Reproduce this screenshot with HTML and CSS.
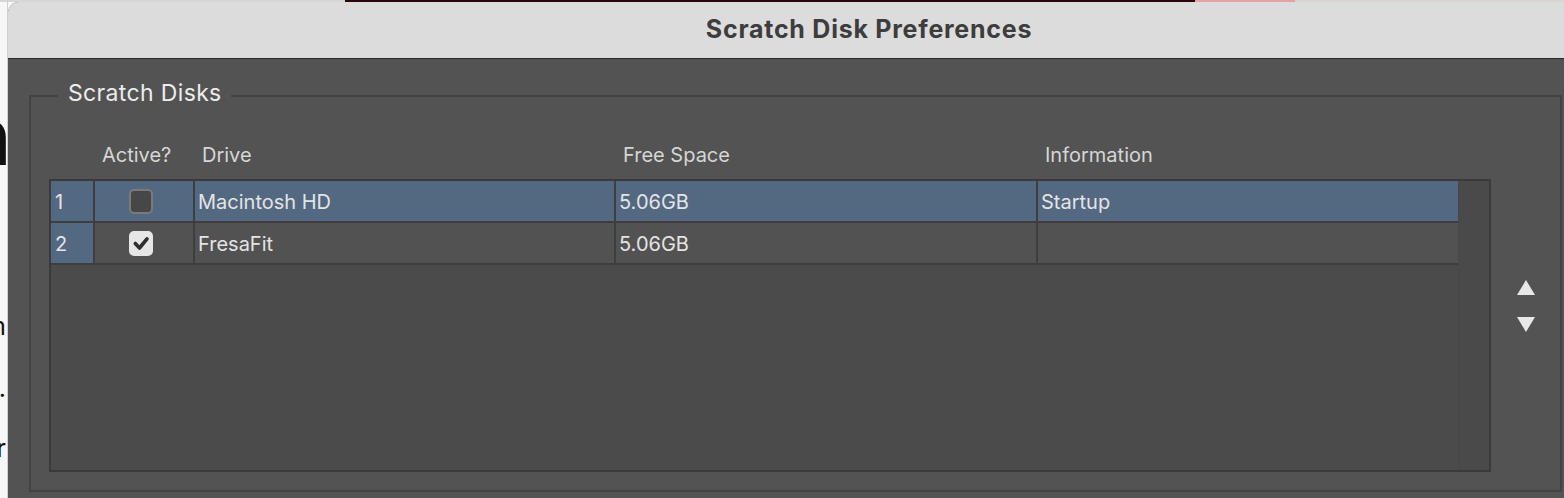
FILE: index.html
```html
<!DOCTYPE html>
<html lang="en">
<head>
<meta charset="utf-8">
<title>Scratch Disk Preferences</title>
<link rel="stylesheet" href="styles.css">
</head>
<body>
<div class="page">
  <div class="pline big"><span>Design</span></div>
  <div class="pline small l1"><span>Custom</span></div>
  <div class="pline small l2"><span>Here is the space.</span></div>
  <div class="pline small l3"><span>Other</span></div>
</div>
<div class="window">
  <div class="titlebar"><h1 class="title">Scratch Disk Preferences</h1></div>
  <div class="content">
    <div class="group">
      <div class="legend">Scratch Disks</div>
      <div class="group-body">
        <div class="main">
          <div class="heads">
            <div class="head"></div>
            <div class="head">Active?</div>
            <div class="head">Drive</div>
            <div class="head">Free Space</div>
            <div class="head">Information</div>
          </div>
          <div class="table">
            <div class="rows">
              <div class="row sel">
                <div class="cell idx">1</div>
                <div class="cell chk"><span class="box"></span></div>
                <div class="cell">Macintosh HD</div>
                <div class="cell">5.06GB</div>
                <div class="cell">Startup</div>
              </div>
              <div class="row">
                <div class="cell idx">2</div>
                <div class="cell chk"><span class="box on"><svg viewBox="0 0 24 24" width="24" height="24"><path d="M6.3 12.5 L10.5 17 L18 7.8" fill="none" stroke="#2e2e2e" stroke-width="3.6" stroke-linecap="round" stroke-linejoin="round"/></svg></span></div>
                <div class="cell">FresaFit</div>
                <div class="cell">5.06GB</div>
                <div class="cell"></div>
              </div>
            </div>
            <div class="track"></div>
          </div>
        </div>
        <div class="arrows">
          <svg class="arrow" viewBox="0 0 18 15" width="18" height="15"><path d="M9 0 L18 15 L0 15 Z" fill="#e8e8e8"/></svg>
          <svg class="arrow" viewBox="0 0 18 15" width="18" height="15"><path d="M0 0 L18 0 L9 15 Z" fill="#e8e8e8"/></svg>
        </div>
      </div>
    </div>
  </div>
</div>
</body>
</html>
```

FILE: styles.css
```css
* { box-sizing: border-box; }
html, body { margin: 0; padding: 0; }
body {
  width: 1564px;
  height: 498px;
  overflow: hidden;
  display: flex;
  font-family: "Inter", "Liberation Sans", sans-serif;
  background:
    linear-gradient(to right, #d6d6d6 0 345px, #2a0608 345px 1195px, #e4a2a2 1195px 1295px, #d8d4d0 1295px) top left / 100% 2px no-repeat,
    #f7f7f7;
}
.page {
  width: 8px;
  flex-shrink: 0;
  overflow: hidden;
  padding-top: 96px;
  border-right: 1px solid #cfcfcf;
  color: #111;
}
.pline {
  display: flex;
  justify-content: flex-end;
  white-space: nowrap;
  padding-right: 1px;
}
.pline span { flex-shrink: 0; }
.big { font-size: 80px; line-height: 80px; }
.big span { margin-right: -6px; }
.small { font-size: 25px; line-height: 30px; }
.l1 { margin-top: 135px; }
.l2 { margin-top: 32px; }
.l3 { margin-top: 30px; }

.window {
  flex: 1;
  margin-top: 2px;
  border-top-left-radius: 11px;
  overflow: hidden;
  display: flex;
  flex-direction: column;
  background: #535353;
}
.titlebar {
  height: 57px;
  flex-shrink: 0;
  background: #dcdcdc;
  border-bottom: 1px solid #2b2b2b;
  padding-left: 166px;
  text-align: center;
}
.title {
  margin: 0;
  font-size: 25px;
  font-weight: 700;
  letter-spacing: 0.75px;
  line-height: 54px;
  color: #3d3d3d;
}
.content { flex: 1; }
.group {
  margin: 36px 2px 0 21px;
  border: 2px solid #434343;
  padding: 0 0 18px 18px;
}
.legend {
  width: fit-content;
  margin: -18px 0 0 9px;
  padding: 0 9px 0 10px;
  background: #535353;
  font-size: 23px;
  letter-spacing: 0.35px;
  line-height: 28px;
  color: #ececec;
}
.group-body { display: flex; }
.main { width: 1442px; flex-shrink: 0; }
.heads {
  margin: 35px 0 13px 2px;
  display: grid;
  grid-template-columns: 42px 98px 419px 420px 420px;
  column-gap: 2px;
  height: 24px;
}
.head {
  padding-left: 7px;
  font-size: 20px;
  line-height: 26px;
  color: #d6d6d6;
}
.table {
  height: 293px;
  border: 2px solid #3a3a3a;
  background: #4b4b4b;
  display: flex;
}
.rows { width: 1407px; flex-shrink: 0; }
.row {
  display: grid;
  grid-template-columns: 42px 98px 419px 420px 420px;
  column-gap: 2px;
  background: #3e3e3e;
  border-bottom: 2px solid #3e3e3e;
}
.cell {
  height: 40px;
  background: #525252;
  padding-left: 3px;
  font-size: 20px;
  line-height: 43px;
  color: #e4e4e4;
}
.row .idx { background: #536881; padding-left: 4px; }
.row.sel .cell { background: #536881; }
.chk { display: flex; align-items: center; padding-left: 34px; }
.box {
  width: 24px;
  height: 25px;
  border-radius: 5px;
  border: 2px solid #7a7a7a;
  background: #474747;
  display: flex;
  align-items: center;
  justify-content: center;
}
.box.on { background: #e6e6e6; border-color: #e6e6e6; }
.box svg { display: block; flex-shrink: 0; }
.track {
  flex: 1;
  background: #4a4a4a;
  border-left: 1px solid #474747;
}
.arrows {
  flex: 1;
  display: flex;
  flex-direction: column;
  align-items: center;
  padding-top: 173px;
  gap: 22px;
}
.arrow { display: block; }
```
